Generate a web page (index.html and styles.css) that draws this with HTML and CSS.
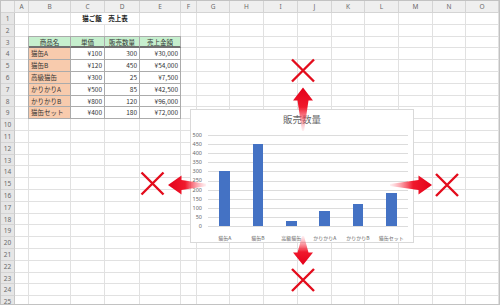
FILE: index.html
```html
<!DOCTYPE html>
<html lang="ja">
<head>
    <meta charset="UTF-8">
    <title>猫ご飯 売上表</title>
    <link rel="stylesheet" href="styles.css">
</head>
<body>
    <div class="sheet">
        <div class="grid" id="grid"></div>

        <div class="chart">
            <div class="chart-title">販売数量</div>
            <div class="chart-body">
                <div class="y-axis">
                    <span>500</span><span>450</span><span>400</span><span>350</span>
                    <span>300</span><span>250</span><span>200</span><span>150</span>
                    <span>100</span><span>50</span><span>0</span>
                </div>
                <div class="plot">
                    <div class="cat"><div class="bar" style="height:54.6px"></div></div>
                    <div class="cat"><div class="bar" style="height:81.9px"></div></div>
                    <div class="cat"><div class="bar" style="height:4.6px"></div></div>
                    <div class="cat"><div class="bar" style="height:15.5px"></div></div>
                    <div class="cat"><div class="bar" style="height:21.8px"></div></div>
                    <div class="cat"><div class="bar" style="height:32.8px"></div></div>
                </div>
            </div>
            <div class="x-axis">
                <span>猫缶A</span><span>猫缶B</span><span>高級猫缶</span>
                <span>かりかりA</span><span>かりかりB</span><span>猫缶セット</span>
            </div>
        </div>

        <svg class="marks" viewBox="1 1 498 303" width="498" height="303">
            <defs>
                <linearGradient id="fade-up" x1="0" y1="0" x2="0" y2="1">
                    <stop offset="0" stop-color="#e3001a"/>
                    <stop offset="0.45" stop-color="#f0192c"/>
                    <stop offset="1" stop-color="#ff7080" stop-opacity="0.1"/>
                </linearGradient>
                <linearGradient id="fade-down" x1="0" y1="1" x2="0" y2="0">
                    <stop offset="0" stop-color="#e3001a"/>
                    <stop offset="0.45" stop-color="#f0192c"/>
                    <stop offset="1" stop-color="#ff7080" stop-opacity="0.1"/>
                </linearGradient>
                <linearGradient id="fade-left" x1="0" y1="0" x2="1" y2="0">
                    <stop offset="0" stop-color="#e3001a"/>
                    <stop offset="0.45" stop-color="#f0192c"/>
                    <stop offset="1" stop-color="#ff7080" stop-opacity="0.1"/>
                </linearGradient>
                <linearGradient id="fade-right" x1="1" y1="0" x2="0" y2="0">
                    <stop offset="0" stop-color="#e3001a"/>
                    <stop offset="0.45" stop-color="#f0192c"/>
                    <stop offset="1" stop-color="#ff7080" stop-opacity="0.1"/>
                </linearGradient>
            </defs>

            <!-- arrows -->
            <polygon fill="url(#fade-up)" points="303,87.5 313,100.5 308.5,100.5 304,131 302,131 297.5,100.5 293,100.5"/>
            <polygon fill="url(#fade-down)" points="303,265 313,252.5 308.5,252.5 304,236 302,236 297.5,252.5 293,252.5"/>
            <polygon fill="url(#fade-left)" points="168,185 181.5,175.5 181.5,180 206,183.8 206,186.2 181.5,190 181.5,194.5"/>
            <polygon fill="url(#fade-right)" points="432,185 418.5,175.5 418.5,180 390,184 390,186 418.5,190 418.5,194.5"/>

            <!-- crosses -->
            <g stroke="#e30c1c" stroke-width="2.4" stroke-linecap="butt">
                <path d="M292 59.5 L314 81.5 M314 59.5 L292 81.5"/>
                <path d="M141.5 172.5 L163.5 194.5 M163.5 172.5 L141.5 194.5"/>
                <path d="M436 174 L458 196 M458 174 L436 196"/>
                <path d="M292 269 L314 291 M314 269 L292 291"/>
            </g>
        </svg>
    </div>

    <script>
        const letters = ['', 'A', 'B', 'C', 'D', 'E', 'F', 'G', 'H', 'I', 'J', 'K', 'L', 'M', 'N', 'O'];
        const rowCount = 25;

        // B3:E9
        const table = [
            ['商品名', '単価', '販売数量', '売上金額'],
            ['猫缶A', '¥100', '300', '¥30,000'],
            ['猫缶B', '¥120', '450', '¥54,000'],
            ['高級猫缶', '¥300', '25', '¥7,500'],
            ['かりかりA', '¥500', '85', '¥42,500'],
            ['かりかりB', '¥800', '120', '¥96,000'],
            ['猫缶セット', '¥400', '180', '¥72,000']
        ];

        const grid = document.getElementById('grid');

        function addCell(text, classes) {
            const cell = document.createElement('div');
            cell.className = 'cell ' + classes;
            cell.textContent = text;
            grid.appendChild(cell);
            return cell;
        }

        // column headers
        letters.forEach((l, i) => addCell(l, i === 0 ? 'corner' : 'col-head'));

        for (let r = 1; r <= rowCount; r++) {
            addCell(r, 'row-head');
            for (let c = 1; c < letters.length; c++) {
                if (r === 1 && c === 3) {
                    addCell('猫ご飯　売上表', 'title').style.gridColumn = 'span 2';
                    c++;
                    continue;
                }
                const inTable = r >= 3 && r <= 9 && c >= 2 && c <= 5;
                if (!inTable) {
                    addCell('', '');
                    continue;
                }
                const text = table[r - 3][c - 2];
                let cls = 't';
                if (r === 3) cls += ' th';
                else if (c === 2) cls += ' name';
                else cls += ' num';
                if (c === 2) cls += ' t-left';
                if (r === 3) cls += ' t-top';
                addCell(text, cls);
            }
        }
    </script>
</body>
</html>
```

FILE: styles.css
```css
:root {
    --grid-line: #e1e1e1;
    --head-bg: #efefef;
    --head-text: #6a6a6a;
    --table-line: #ababab;
    --green: #c6efce;
    --orange: #f8cbad;
    --bar: #4472c4;
    --chart-text: #666;
}

body {
    margin: 0;
    background: #fff;
    font-family: "Noto Sans CJK JP", "Noto Sans", sans-serif;
}

.sheet {
    position: relative;
    width: 498px;
    height: 303px;
    border: 1px solid #c2c2c2;
    overflow: hidden;
    background: #fff;
}

.grid {
    display: grid;
    grid-template-columns: 14px 14px 42px 34px 35px 41px 16px 33px 34px 34px 34px 33px 34px 34px 33px 33px;
    grid-template-rows: 12px;
    grid-auto-rows: 11.8px;
}

.cell {
    box-sizing: border-box;
    border-right: 1px solid var(--grid-line);
    border-bottom: 1px solid var(--grid-line);
    font-size: 6.5px;
    line-height: 11px;
    padding: 0 2px;
    white-space: nowrap;
    color: #333;
}

.corner,
.col-head,
.row-head {
    background: var(--head-bg);
    color: var(--head-text);
    text-align: center;
    padding: 0;
    font-family: "Noto Sans", sans-serif;
    font-size: 6.5px;
    border-color: #d4d4d4;
}

.col-head {
    line-height: 12px;
}

.row-head {
    background: #e6e6e6;
    border-right-color: #c8c8c8;
}

.title {
    font-weight: bold;
    text-align: center;
    color: #222;
}

.t {
    border-right-color: var(--table-line);
    border-bottom-color: var(--table-line);
}

.t-left {
    box-shadow: -1px 0 0 var(--table-line);
}

.t-top {
    box-shadow: 0 -1px 0 var(--table-line);
}

.t-top.t-left {
    box-shadow: -1px 0 0 var(--table-line), 0 -1px 0 var(--table-line), -1px -1px 0 var(--table-line);
}

.th {
    background: var(--green);
    text-align: center;
    border-bottom: 2px solid #707070;
}

.name {
    background: var(--orange);
}

.num {
    text-align: right;
}

/* chart */
.chart {
    position: absolute;
    left: 189px;
    top: 108px;
    width: 224px;
    height: 134px;
    box-sizing: border-box;
    border: 1px solid #d9d9d9;
    background: #fff;
    padding-top: 3px;
    color: var(--chart-text);
}

.chart-title {
    height: 13px;
    line-height: 13px;
    font-size: 9.5px;
    text-align: center;
}

.chart-body {
    display: flex;
    gap: 6px;
    margin-top: 9px;
}

.y-axis {
    width: 11px;
    height: 97px;
    margin-top: -3px;
    display: flex;
    flex-direction: column;
    justify-content: space-between;
    align-items: flex-end;
    font-family: "Noto Sans", sans-serif;
    font-size: 5.5px;
    line-height: 6px;
}

.plot {
    width: 200px;
    height: 92px;
    display: flex;
    align-items: flex-end;
    padding-bottom: 1px;
    box-sizing: border-box;
    background: repeating-linear-gradient(to bottom, #dcdcdc 0 1px, transparent 1px 9.1px);
}

.cat {
    flex: 1;
    display: flex;
    justify-content: center;
}

.bar {
    width: 10.5px;
    background: var(--bar);
}

.x-axis {
    display: flex;
    width: 200px;
    margin: 5px 0 0 17px;
    font-size: 5px;
    line-height: 7px;
}

.x-axis span {
    flex: 1;
    text-align: center;
    white-space: nowrap;
}

.marks {
    position: absolute;
    left: 0;
    top: 0;
    pointer-events: none;
}
```
